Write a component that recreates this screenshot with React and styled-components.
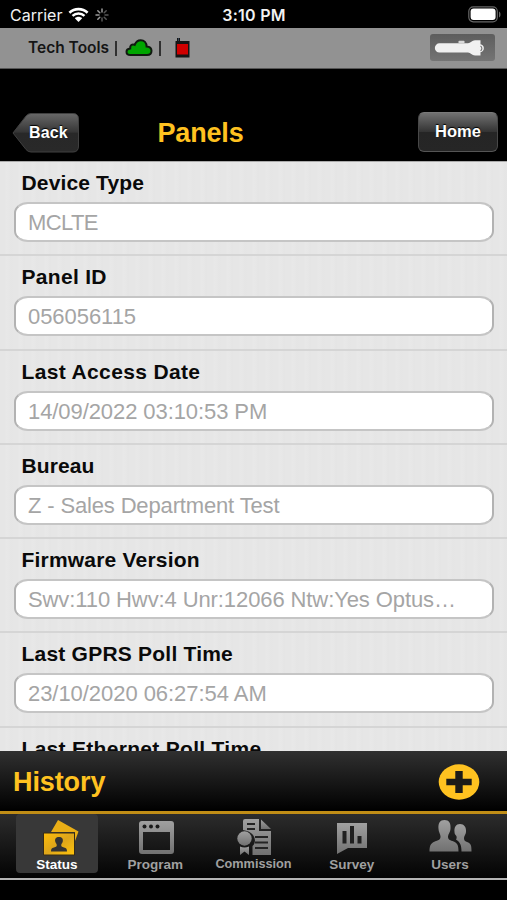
import React from "react";
import styled, { createGlobalStyle } from "styled-components";

const GlobalStyle = createGlobalStyle`
  * {
    box-sizing: border-box;
  }
  body {
    margin: 0;
    background: #000;
    font-family: "Liberation Sans", Arial, sans-serif;
  }
  svg {
    display: block;
  }
`;

const Screen = styled.div`
  width: 507px;
  height: 900px;
  display: flex;
  flex-direction: column;
  background: #000;
  overflow: hidden;
`;

const StatusBar = styled.div`
  height: 28px;
  flex: none;
  display: grid;
  grid-template-columns: 1fr auto 1fr;
  align-items: center;
  padding: 1px 6px 0 10px;
  color: #f2f2f2;
  font-family: Inter, sans-serif;
  font-size: 16px;
`;

const Carrier = styled.div`
  display: flex;
  align-items: center;
  gap: 6px;
`;

const Time = styled.div`
  padding-right: 3px;
  font-weight: 600;
  letter-spacing: 0.25px;
`;

const Battery = styled.div`
  display: flex;
  justify-content: flex-end;
`;

const ToolStrip = styled.div`
  height: 41px;
  flex: none;
  display: flex;
  align-items: center;
  justify-content: space-between;
  padding: 0 12px 0 28px;
  background: #929292;
  border-bottom: 1px solid #555;
`;

const ToolInfo = styled.div`
  display: flex;
  align-items: center;
  padding-bottom: 1px;
  color: #151515;
  font-family: Inter, sans-serif;
  font-size: 15.5px;
  font-weight: 600;
`;

const Separator = styled.span`
  width: 2px;
  height: 15px;
  margin: 1px ${(props) => props.$after}px 0 6px;
  background: #303030;
`;

const TorchButton = styled.div`
  width: 65px;
  height: 27px;
  margin-bottom: 1px;
  border-radius: 3px;
  background: linear-gradient(#5d5d5d, #747474);
`;

const Header = styled.div`
  height: 92px;
  flex: none;
  display: flex;
  align-items: flex-start;
  justify-content: space-between;
  padding: 43px 9px 0 12px;
  background: #000;
`;

const BackButton = styled.div`
  display: grid;
  width: 68px;
  height: 41px;
  svg,
  span {
    grid-area: 1 / 1;
  }
  span {
    align-self: center;
    padding-left: 17px;
    color: #fff;
    font-size: 16px;
    font-weight: 700;
    letter-spacing: 0.1px;
    text-shadow: 0 -1px 1px #000;
  }
`;

const Title = styled.h1`
  margin: 6px 97px 0 0;
  color: #ffc220;
  font-size: 27px;
  line-height: 31px;
  font-weight: 700;
  letter-spacing: -0.15px;
`;

const HomeButton = styled.div`
  width: 80px;
  height: 40px;
  border-radius: 6px;
  border: 1px solid #484848;
  border-top-color: #797979;
  border-bottom-color: #555;
  background: linear-gradient(#717171, #343434 49%, #252525 50%, #262626);
  color: #fff;
  font-size: 16.5px;
  font-weight: 700;
  line-height: 36px;
  text-align: center;
  text-shadow: 0 -1px 1px #000;
`;

const FieldList = styled.div`
  height: 590px;
  flex: none;
  overflow: hidden;
  border-top: 1px solid #aaa;
  background: repeating-linear-gradient(
    90deg,
    #e6e6e6 0,
    #e6e6e6 5px,
    #e8e8e8 6px,
    #e7e7e7 9px,
    #e5e5e5 11px,
    #e6e6e6 13px
  );
`;

const Field = styled.div`
  height: 94.25px;
  padding: 8px 13px 0 14px;
  border-bottom: 2px solid #d5d5d5;
`;

const Label = styled.div`
  height: 32px;
  padding-left: 7.5px;
  color: #0a0a0a;
  font-size: 21px;
  font-weight: 700;
  letter-spacing: ${(props) => props.$spacing}px;
  line-height: 25px;
  white-space: nowrap;
`;

const Value = styled.div`
  height: 40px;
  padding: 0 12px;
  border: 2px solid #bdbdbd;
  border-color: #c5c5c5 #b2b2b2 #c5c5c5 #b2b2b2;
  border-radius: 14px / 11px;
  background: #fff;
  color: #a5a5a5;
  font-size: 22px;
  letter-spacing: ${(props) => props.$spacing}px;
  line-height: 37px;
  white-space: nowrap;
`;

const HistoryBar = styled.div`
  height: 60px;
  flex: none;
  display: flex;
  align-items: center;
  justify-content: space-between;
  padding: 2px 27px 0 13px;
  background: linear-gradient(#303030, #000);
  color: #ffc220;
  font-size: 27px;
  font-weight: 700;
  letter-spacing: -0.1px;
`;

const TabBar = styled.div`
  height: 69px;
  flex: none;
  display: grid;
  grid-template-columns: repeat(5, 98.3px);
  justify-content: center;
  border-top: 3px solid #c08d16;
  border-bottom: 2px solid #b4b4b4;
  background: linear-gradient(#2c2c2c, #030303);
`;

const Tab = styled.div`
  width: 82px;
  height: 59px;
  justify-self: center;
  display: flex;
  flex-direction: column;
  align-items: center;
  border-radius: 4px;
  background: ${(props) => (props.$active ? "#383838" : "transparent")};
  color: ${(props) => (props.$active ? "#fff" : "#a0a0a0")};
  font-size: ${(props) => props.$size || 13.5}px;
  font-weight: 700;
  line-height: 15px;
  svg {
    flex: none;
    margin: 3px 0 0 ${(props) => props.$shift || 0}px;
  }
`;

const WifiIcon = () => (
  <svg width="21" height="16" viewBox="0 0 21 16" fill="none">
    <path d="M1.4 5.8C6.6.9 14.4.9 19.6 5.8M4.5 8.9c3.5-3.2 8.5-3.2 12 0" stroke="#fff" strokeWidth="2.6" />
    <path d="M6.8 11.2c2.1-2 5.3-2 7.4 0l-3.7 3.9z" fill="#fff" />
  </svg>
);

const SpinnerIcon = () => (
  <svg width="14" height="14" viewBox="0 0 14 14" stroke="#999" strokeWidth="1.5" strokeLinecap="round">
    <path d="M7 1v3M2.8 2.8l2 2M1 7h3M2.8 11.2l2-2" />
    <path d="M7 10v3M11.2 2.8l-2 2M10 7h3M9.2 9.2l2 2" stroke="#555" />
  </svg>
);

const BatteryIcon = () => (
  <svg width="33" height="17" viewBox="0 0 33 17">
    <rect x="0.8" y="0.8" width="28.5" height="15" rx="4.5" fill="none" stroke="#666" strokeWidth="1.2" />
    <rect x="2.6" y="2.6" width="25" height="11.4" rx="3" fill="#fff" />
    <path d="M31 5.5c2 .9 2 5 0 6z" fill="#666" />
  </svg>
);

const CloudIcon = () => (
  <svg width="28" height="18" viewBox="0 0 28 18">
    <path
      d="M5.5 16C2.8 16 1.5 14.7 1.5 12.7c0-2 1.5-3.1 3.7-3.3C4.9 6.5 7 4.6 9.7 5.8 11 2.6 13 1.3 15.7 1.3c3.5 0 5.8 2.5 5.9 6.2 3 .2 4.9 1.9 4.9 4.3S24.8 16 22 16z"
      fill="#00a600"
      stroke="#101810"
      strokeWidth="2"
    />
  </svg>
);

const DeviceIcon = () => (
  <svg width="15" height="20" viewBox="0 0 15 20">
    <path d="M2 0h3v3h9.5v16.5H.5V3H2z" fill="#151515" />
    <path d="M3 0h1v3H3z" fill="#345" />
    <rect x="2" y="6" width="11" height="10.5" fill="#d00000" />
  </svg>
);

const TorchIcon = () => (
  <svg width="65" height="27" viewBox="0 0 65 27">
    <path
      d="M9.5 9.3H38c2.5 0 4-3 7-3h5.5v4c4.5.5 4.5 7.5 0 8v3.3H45c-3 0-4.5-3-7-3H9.5a4.6 4.6 0 0 1 0-9.3z"
      fill="#f0f0f0"
    />
    <path d="M28.5 9.3V7.5q0-.8.8-.8h4.4q.8 0 .8.8v1.8z" fill="#d8d8d8" />
    <path d="M50.5 12c1.8 1 1.8 3.8 0 4.8" fill="none" stroke="#777" strokeWidth="1.2" />
  </svg>
);

const BackShape = () => (
  <svg width="68" height="41" viewBox="0 0 68 41">
    <defs>
      <linearGradient id="back" x1="0" y1="0" x2="0" y2="1">
        <stop offset="0" stopColor="#686868" />
        <stop offset="0.49" stopColor="#353535" />
        <stop offset="0.5" stopColor="#282828" />
        <stop offset="1" stopColor="#292929" />
      </linearGradient>
    </defs>
    <path
      d="M19 1.5h42q5.500 0 5.500 5.500v27q0 6-5.500 6H19q-3 0-5-2.500L1 21 14 4Q16 1.500 19 1.500z"
      fill="url(#back)"
      stroke="#404040"
    />
  </svg>
);

const PlusIcon = () => (
  <svg width="42" height="37" viewBox="0 0 42 37">
    <ellipse cx="21" cy="18" rx="20.3" ry="17.7" fill="#ffc220" />
    <path d="M17.3 7h7.4v7.7h9v6.5h-9V29h-7.4v-7.8h-9v-6.500h9z" fill="#1c1b18" />
  </svg>
);

const StatusIcon = () => (
  <svg width="40" height="40" viewBox="0 0 40 40">
    <defs>
      <linearGradient id="gold" x1="0" y1="0" x2="1" y2="1">
        <stop offset="0" stopColor="#ffbd08" />
        <stop offset="0.5" stopColor="#dda51b" />
        <stop offset="1" stopColor="#ffc40b" />
      </linearGradient>
    </defs>
    <path d="M10 15L17 3l20.5 11.5L34 24v-9z" fill="#e9ae16" />
    <path d="M2.5 16h31v22h-31z" fill="url(#gold)" stroke="#352b16" />
    <path
      d="M18 20c-3 0-4.5 2-3.7 4.800.4 1.400 1.500 2 1.500 3.500 0 1.300-1 1.700-2.800 2.200-2.500.7-3 1.500-3 4h16c0-2.500-.5-3.300-3-4-1.800-.5-2.800-.9-2.800-2.200 0-1.500 1.100-2.100 1.500-3.500C22.500 22 21 20 18 20z"
      fill="#333"
    />
  </svg>
);

const Metal = ({ id }) => (
  <defs>
    <linearGradient id={id} x1="0" y1="0" x2="0" y2="1">
      <stop offset="0" stopColor="#a0a0a0" />
      <stop offset="1" stopColor="#717171" />
    </linearGradient>
  </defs>
);

const ProgramIcon = () => (
  <svg width="40" height="40" viewBox="0 0 40 40">
    <Metal id="program" />
    <path
      fillRule="evenodd"
      d="M6 4h29q3 0 3 3v27q0 3-3 3H6q-3 0-3-3V7q0-3 3-3zm1 11v18h27V15z"
      fill="url(#program)"
    />
    <g fill="#1a1a1a">
      <circle cx="8.5" cy="9.5" r="2" />
      <circle cx="15" cy="9.5" r="2" />
      <circle cx="21.5" cy="9.5" r="2" />
    </g>
  </svg>
);

const CommissionIcon = () => (
  <svg width="40" height="40" viewBox="0 0 40 40">
    <Metal id="commission" />
    <g fill="url(#commission)">
      <path d="M10 2h14v12h12v24H17.5v-9C22 25 21 15 8 13V4q0-2 2-2z" />
      <path d="M26 2.5L36 12H26z" />
      <circle cx="9.5" cy="21.5" r="7.2" />
      <path d="M5 29.5q4.500 2 9 0V38l-4.500-3.500L5 38z" />
    </g>
    <path d="M12 7h8M12 12h8M20 20h13M20 25.5h13M20 31h13" stroke="#242424" strokeWidth="2" />
  </svg>
);

const SurveyIcon = () => (
  <svg width="40" height="40" viewBox="0 0 40 40">
    <Metal id="survey" />
    <path d="M5 6h30v25H16L5 37z" fill="url(#survey)" />
    <path d="M10.5 14h4v12.5h-4zM18 9h4v17.5h-4zM25.5 19h4v7.5h-4z" fill="#202020" />
  </svg>
);

const UsersIcon = () => (
  <svg width="46" height="40" viewBox="0 0 46 40">
    <Metal id="users" />
    <g fill="url(#users)">
      <path d="M27.5 15C27 10 29 7 33 7s6.5 3 6 8c0 2-2 4-2 6s.5 3 3 4c4 1.5 4.5 3 4.5 9.5h-10C34.5 28 33 25 29 22.500c1-1.500.8-3 0-4-1-1-1.500-2-1.500-3.500z" />
      <path d="M11.5 12C11 6 13 3 17.500 3S24 6 23.500 12c0 3-2.500 5-2.500 7.500 0 3 1.500 3.500 4.500 4.500 5 2 6 4 6 10.500h-29c0-6.500 1.500-8.500 6.500-10.500 3-1 4.500-1.500 4.500-4.500 0-2.500-2-4.500-2-7.500z" />
    </g>
  </svg>
);

const fields = [
  { label: "Device Type", labelSpacing: 0.15, value: "MCLTE", valueSpacing: -0.6 },
  { label: "Panel ID", labelSpacing: 0.3, value: "056056115", valueSpacing: -0.05 },
  { label: "Last Access Date", labelSpacing: 0.36, value: "14/09/2022 03:10:53 PM", valueSpacing: -0.08 },
  { label: "Bureau", labelSpacing: 0.1, value: "Z - Sales Department Test", valueSpacing: -0.15 },
  { label: "Firmware Version", labelSpacing: 0.2, value: "Swv:110 Hwv:4 Unr:12066 Ntw:Yes Optus…", valueSpacing: -0.1 },
  { label: "Last GPRS Poll Time", labelSpacing: 0.22, value: "23/10/2020 06:27:54 AM", valueSpacing: -0.05 },
  { label: "Last Ethernet Poll Time", labelSpacing: 0.3, value: "", valueSpacing: 0 },
];

const tabs = [
  { name: "Status", icon: <StatusIcon />, active: true, shift: 9 },
  { name: "Program", icon: <ProgramIcon />, shift: 2 },
  { name: "Commission", icon: <CommissionIcon />, size: 12.7, shift: 4 },
  { name: "Survey", icon: <SurveyIcon /> },
  { name: "Users", icon: <UsersIcon /> },
];

const App = () => {
  return (
    <Screen>
      <GlobalStyle />
      <StatusBar>
        <Carrier>
          Carrier
          <WifiIcon />
          <SpinnerIcon />
        </Carrier>
        <Time>3:10 PM</Time>
        <Battery>
          <BatteryIcon />
        </Battery>
      </StatusBar>
      <ToolStrip>
        <ToolInfo>
          Tech Tools
          <Separator $after={8} />
          <CloudIcon />
          <Separator $after={14} />
          <DeviceIcon />
        </ToolInfo>
        <TorchButton>
          <TorchIcon />
        </TorchButton>
      </ToolStrip>
      <Header>
        <BackButton>
          <BackShape />
          <span>Back</span>
        </BackButton>
        <Title>Panels</Title>
        <HomeButton>Home</HomeButton>
      </Header>
      <FieldList>
        {fields.map((field) => (
          <Field key={field.label}>
            <Label $spacing={field.labelSpacing}>{field.label}</Label>
            <Value $spacing={field.valueSpacing}>{field.value}</Value>
          </Field>
        ))}
      </FieldList>
      <HistoryBar>
        History
        <PlusIcon />
      </HistoryBar>
      <TabBar>
        {tabs.map((tab) => (
          <Tab key={tab.name} $active={tab.active} $size={tab.size} $shift={tab.shift}>
            {tab.icon}
            {tab.name}
          </Tab>
        ))}
      </TabBar>
    </Screen>
  );
};

export default App;
